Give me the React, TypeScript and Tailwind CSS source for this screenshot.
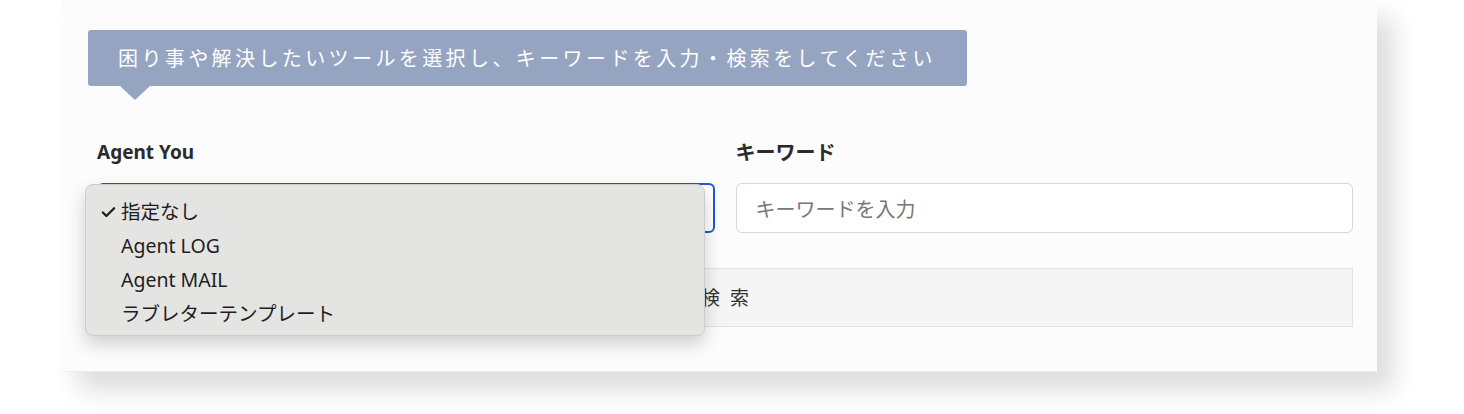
import { Check } from 'lucide-react';

const options = ['指定なし', 'Agent LOG', 'Agent MAIL', 'ラブレターテンプレート'];

export default function App() {
  return (
    <div
      className="min-h-[414px] w-full bg-white pl-[62px]"
      style={{ fontFamily: '"Noto Sans", "Noto Sans CJK JP", sans-serif' }}
    >
      <div className="h-[372px] w-[1315px] bg-[#fcfcfc] border-b border-[#efefef] shadow-[16px_18px_24px_rgba(0,0,0,0.14)] pt-[30px] pl-[26px] pr-[24px]">
        <div className="relative flex h-[56px] w-[879px] items-center rounded-[3px] bg-[#95a4c0] pl-[30px]">
          <span
            className="text-[20px] leading-none tracking-[3.4px] text-white"
            style={{ fontFamily: '"Noto Sans CJK JP", sans-serif' }}
          >
            困り事や解決したいツールを選択し、キーワードを入力・検索をしてください
          </span>
          <span className="absolute left-[32px] top-[56px] h-0 w-0 border-x-[15px] border-t-[14px] border-x-transparent border-t-[#95a4c0]" />
        </div>

        <div className="mt-[52px] grid grid-cols-2 gap-x-[21px] pl-[9px]">
          <div className="relative">
            <label className="block text-[19px] font-bold leading-[28px] text-[#2b2b2b]">Agent You</label>
            <div className="mt-[17px] h-[50px] rounded-[6px] border-[2.5px] border-[#1a5ad0] bg-white" />

            <div className="absolute left-[-12px] top-[46px] z-10 w-[620px] rounded-[8px] border border-[#cdcdcd] bg-[#e4e4e3] pt-[10px] pb-[4px] shadow-[0_8px_18px_rgba(0,0,0,0.18)]">
              {options.map((opt, i) => (
                <div key={opt} className="relative flex h-[34px] items-center pl-[35px] text-[19.5px] text-[#1e1e1e]">
                  {i === 0 && (
                    <Check size={17} strokeWidth={3.2} className="absolute left-[14px] text-[#1e1e1e]" />
                  )}
                  {opt}
                </div>
              ))}
            </div>
          </div>

          <div>
            <label
              className="block text-[20px] font-bold leading-[28px] text-[#2b2b2b]"
              style={{ fontFamily: '"Noto Sans CJK JP", sans-serif' }}
            >
              キーワード
            </label>
            <input
              className="mt-[17px] h-[50px] w-full rounded-[6px] border border-[#d3d8df] bg-white px-[19px] text-[20px] placeholder:text-[#777] outline-none"
              style={{ fontFamily: '"Noto Sans CJK JP", sans-serif' }}
              placeholder="キーワードを入力"
            />
          </div>

          <button
            className="col-span-2 mt-[35px] flex h-[59px] items-center justify-center border border-[#e2e2e2] bg-[#f5f5f5] text-[19px] tracking-[10px] text-[#333]"
            style={{ fontFamily: '"Noto Sans CJK JP", sans-serif' }}
          >
            <span className="pl-[10px]">検索</span>
          </button>
        </div>
      </div>
    </div>
  );
}
